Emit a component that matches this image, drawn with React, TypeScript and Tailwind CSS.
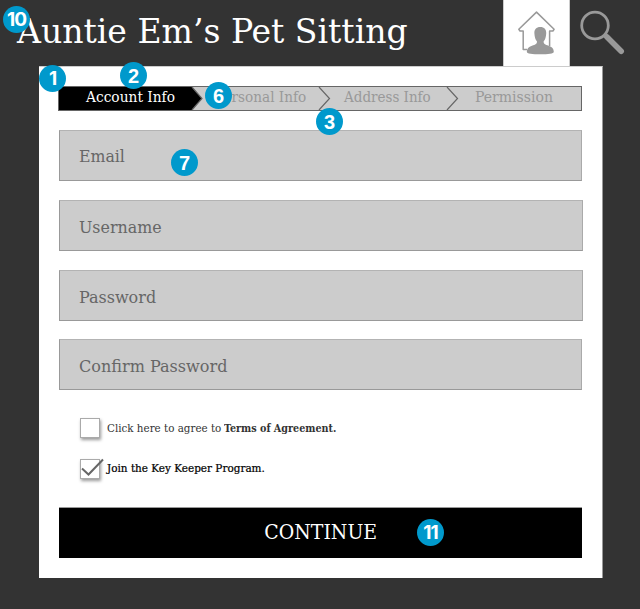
import React from "react";

const serif = "font-['DejaVu_Serif_Condensed','DejaVu_Serif',serif] [font-stretch:condensed]";
const arial = "font-['Liberation_Sans',sans-serif] text-[20px]";
const inter = "font-['Inter',sans-serif] text-[19px] tracking-[-1px]";

function Badge({ n, place }: { n: string; place: string }) {
  return (
    <span
      className={`absolute z-10 flex size-[27px] items-center justify-center rounded-full bg-[#0099cc] leading-none font-bold text-white ${n.includes("1") ? inter : arial} ${place}`}
    >
      {n}
    </span>
  );
}

function Field({ label, gap, text }: { label: string; gap: string; text: string }) {
  return (
    <div
      className={`flex h-[51px] items-center border border-t-[#b3b3b3] border-r-[#aaa] border-b-[#999] border-l-[#999] bg-[#ccc] pl-[19px] ${gap}`}
    >
      <span className={`origin-left text-[17px] leading-none whitespace-nowrap text-[#666] ${text}`}>{label}</span>
    </div>
  );
}

function Box({ checked }: { checked?: boolean }) {
  return (
    <span className="relative block size-5 shrink-0 border border-[#aaa] bg-white shadow-[1px_2px_3px_rgba(0,0,0,0.4)]">
      {checked && (
        <svg className="absolute -top-1 -left-1" width="30" height="26" viewBox="0 0 30 26" fill="none">
          <path d="M5 12.500 11.500 18.500 26 3.500" stroke="#666" strokeWidth="2" />
        </svg>
      )}
    </span>
  );
}

export default function App() {
  return (
    <div className={`relative h-[609px] w-[640px] overflow-hidden bg-[#333] ${serif}`}>
      <header className="flex h-[66px]">
        <h1 className="w-[503px] pt-[14px] pl-[17px] text-[33px] leading-[36px] whitespace-nowrap text-white">
          <span className="inline-block origin-left scale-x-[1.114]">Auntie Em’s Pet Sitting</span>
        </h1>
        <div className="h-[66px] w-[67px] border-r border-l border-[#ccc] bg-white">
          <svg width="65" height="66" viewBox="504 0 65 66" fill="none">
            <path
              d="M527 49.500H523.200V31h-3.200l-1.200-1.700 17.700-17.200 17.600 17.200-1.200 1.700h-3.300v15"
              stroke="#999"
              strokeWidth="1.500"
              strokeLinejoin="round"
            />
            <path
              d="M540.300 27c-4 0-6.200 2.500-5.900 6.400.2 3.600 1.100 6.200 2.500 7.800.5 2.400-1.500 3.500-4.900 4.500-3.500 1-5.200 3-5.200 6 0 1.900 5.500 2.600 13.500 2.600s13.500-.7 13.500-2.600c0-3-1.700-5-5.200-6-3.400-1-5.400-2.100-4.900-4.500 1.400-1.600 2.300-4.200 2.500-7.800.3-3.900-1.900-6.400-5.900-6.400Z"
              fill="#999"
            />
          </svg>
        </div>
        <svg width="70" height="66" viewBox="570 0 70 66" fill="none">
          <circle cx="595" cy="25.500" r="13.300" stroke="#999" strokeWidth="2.800" />
          <path d="m604.500 35 3.500 3" stroke="#999" strokeWidth="4.500" />
          <path d="m607 37 14.200 14.200" stroke="#999" strokeWidth="5.600" strokeLinecap="round" />
        </svg>
      </header>

      <main className="ml-[39px] h-[512px] w-[564px] border-t border-r border-t-[#ccc] border-r-[#999] bg-white pt-[19px] pl-[19px]">
        <nav className="relative flex h-[25px] w-[524px] border border-[#666] bg-[#ccc] text-[15px] leading-[21px] text-[#999]">
          <svg className="absolute top-0 left-0" width="522" height="23" viewBox="0 0 522 23" fill="none">
            <path d="M0 0H133L143 11.500 133 23H0Z" fill="#000" />
            <path d="m133 0 10 11.500L133 23M260 0l10.500 11.500L260 23M388 0l10.500 11.500L388 23" stroke="#666" strokeWidth="1.200" />
          </svg>
          <span className="relative w-[129px] pl-[27px] whitespace-nowrap text-white">
            <span className="inline-block origin-left scale-x-[1.02]">Account Info</span>
          </span>
          <span className="relative w-[128px] pl-[27px] whitespace-nowrap">
            <span className="inline-block origin-left scale-x-[1.01]">Personal Info</span>
          </span>
          <span className="relative w-[128px] pl-[28px] whitespace-nowrap">
            <span className="inline-block origin-left">Address Info</span>
          </span>
          <span className="relative pl-[31px] whitespace-nowrap">
            <span className="inline-block origin-left scale-x-[1.04]">Permission</span>
          </span>
        </nav>

        <form className="ml-px">
          <Field label="Email" gap="mt-[19px] w-[523px]" text="scale-x-[1.03] pt-px" />
          <Field label="Username" gap="mt-[19px] w-[524px]" text="scale-x-[1.037] pt-1" />
          <Field label="Password" gap="mt-[19px] w-[524px]" text="scale-x-[1.046] pt-[3px]" />
          <Field label="Confirm Password" gap="mt-[18px] w-[523px]" text="scale-x-[1.05] pt-[3px]" />

          <label className="mt-7 ml-[21px] flex h-5 items-center gap-[7px] text-[11px] leading-none whitespace-nowrap text-[#333]">
            <Box />
            <span className="flex gap-2">
              <span className="inline-block origin-left scale-x-[1.045]">Click here to agree to</span>
              <b className="inline-block origin-left scale-x-[0.97]">Terms of Agreement.</b>
            </span>
          </label>
          <label className="mt-[21px] ml-[21px] flex h-5 items-center gap-[7px] text-[11px] leading-none whitespace-nowrap text-black">
            <Box checked />
            <span className="mb-0.5 inline-block origin-left scale-x-[1.057] [-webkit-text-stroke:0.2px_black]">Join the Key Keeper Program.</span>
          </label>

          <button type="button" className="mt-7 block h-[51px] w-[523px] border-t border-[#999] bg-black pb-0.5 text-[20px] leading-none text-white">
            <span className="inline-block scale-x-[1.05]">CONTINUE</span>
          </button>
        </form>
      </main>

      <Badge n="10" place="top-[6px] left-[3px]" />
      <Badge n="1" place="top-[65px] left-[39px]" />
      <Badge n="2" place="top-[62px] left-[120px]" />
      <Badge n="6" place="top-[82px] left-[205px]" />
      <Badge n="3" place="top-[108px] left-[316px]" />
      <Badge n="7" place="top-[149px] left-[171px]" />
      <Badge n="11" place="top-[519px] left-[417px]" />
    </div>
  );
}
